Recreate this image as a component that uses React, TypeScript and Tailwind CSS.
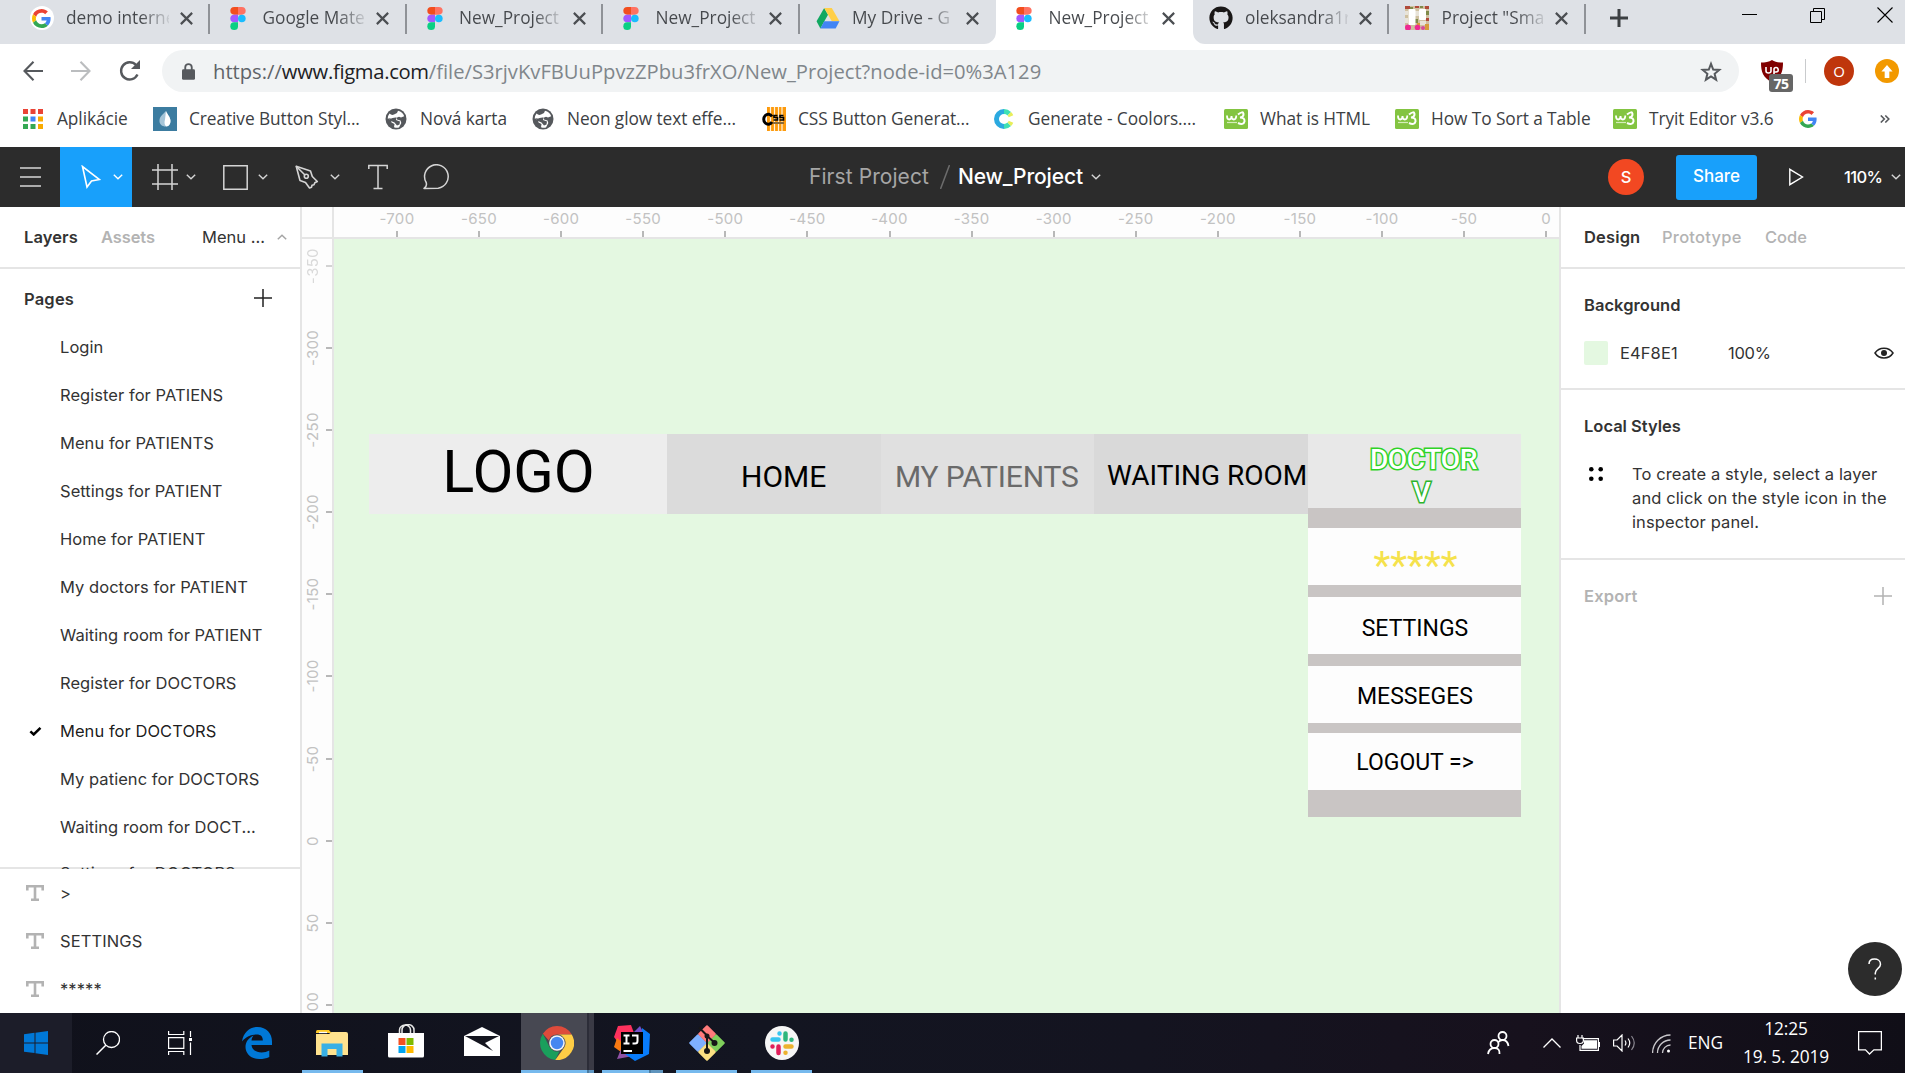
import type { ReactNode } from 'react';
import { FaGithub } from 'react-icons/fa';

const ui = "font-['Inter',sans-serif]";
const seg = "font-['Open_Sans',sans-serif]";

function GoogleG({ className }: { className: string }) {
  return (
    <svg viewBox="0 0 48 48" preserveAspectRatio="none" className={className}>
      <path fill="#EA4335" d="M24 9.5c3.54 0 6.71 1.22 9.21 3.6l6.85-6.85C35.9 2.38 30.47 0 24 0 14.62 0 6.51 5.38 2.56 13.22l7.98 6.19C12.43 13.72 17.74 9.5 24 9.5z" />
      <path fill="#4285F4" d="M46.98 24.55c0-1.57-.15-3.09-.38-4.55H24v9.02h12.94c-.58 2.96-2.26 5.48-4.78 7.18l7.73 6c4.51-4.18 7.09-10.36 7.09-17.65z" />
      <path fill="#FBBC05" d="M10.53 28.59c-.48-1.45-.76-2.99-.76-4.59s.27-3.14.76-4.59l-7.98-6.19C.92 16.46 0 20.12 0 24c0 3.88.92 7.54 2.56 10.78l7.97-6.19z" />
      <path fill="#34A853" d="M24 48c6.48 0 11.93-2.13 15.89-5.81l-7.73-6c-2.15 1.45-4.92 2.3-8.16 2.3-6.26 0-11.57-4.22-13.47-9.91l-7.98 6.19C6.51 42.62 14.62 48 24 48z" />
    </svg>
  );
}

function FigmaLogo() {
  return (
    <svg viewBox="0 0 16 24" className="h-[23px] w-4">
      <path fill="#f24e1e" d="M8 0H4a4 4 0 0 0 0 8h4z" />
      <path fill="#ff7262" d="M8 0h4a4 4 0 0 1 0 8H8z" />
      <path fill="#a259ff" d="M8 8H4a4 4 0 0 0 0 8h4z" />
      <circle cx="12" cy="12" r="4" fill="#1abcfe" />
      <path fill="#0acf83" d="M4 16h4v4a4 4 0 1 1-4-4z" />
    </svg>
  );
}

function DriveLogo() {
  return (
    <svg viewBox="0 0 24 22" className="h-[21px] w-6">
      <path fill="#11a861" d="M8 0 0 14l4 7.5L12 7z" />
      <path fill="#ffcf48" d="M8 0h8l8 14h-8z" />
      <path fill="#4285f4" d="M4 21.5 8 14h16l-4 7.5z" />
    </svg>
  );
}

function TrelloThumb() {
  return (
    <svg viewBox="0 0 24 24" className="size-6">
      <rect width="24" height="24" fill="#cfc0a0" />
      <path fill="#b04a3a" d="M0 0h5v3H0zM10 0h4v2h-4zM20 0h4v3h-4zM21 12h3v3h-3z" />
      <path fill="#e8e3d8" d="M0 5h3v4H0zM10 5h4v5h-4zM15 15h6v4h-6zM0 12h3v5H0z" />
      <path fill="#7f8a4a" d="M5 1h3v2H5zM15 0h3v2h-3zM21 5h3v4h-3zM10 13h3v4h-3z" />
      <path fill="#d89a3a" d="M12 17h3v3h-3zM20 18h4v6h-4z" />
      <circle cx="3" cy="21.5" r="3" fill="#ee2a92" />
      <circle cx="12.5" cy="21.5" r="2.8" fill="#ee2a92" />
      <circle cx="18" cy="22" r="2" fill="#d64a9a" />
      <rect x="3.5" y="3" width="7" height="16" rx="1" fill="#fff" />
      <rect x="14" y="3" width="7" height="11" rx="1" fill="#fff" />
    </svg>
  );
}

function Tab({ icon, title, active, noRule }: { icon: ReactNode; title: string; active?: boolean; noRule?: boolean }) {
  const fade = active
    ? 'bg-[linear-gradient(90deg,#45484c_72%,#fff_104%)]'
    : 'bg-[linear-gradient(90deg,#45484c_72%,#dee1e6_104%)]';
  return (
    <div className={`relative flex h-11 w-[196.5px] shrink-0 items-center pb-2 ${active ? 'bg-white' : ''}`}>
      {active && (
        <>
          <svg viewBox="0 0 12 12" className="absolute bottom-0 -left-3 size-3"><path d="M12 0v12H0A12 12 0 0 0 12 0z" fill="#fff" /></svg>
          <svg viewBox="0 0 12 12" className="absolute -right-3 bottom-0 size-3"><path d="M0 0v12h12A12 12 0 0 1 0 0z" fill="#fff" /></svg>
        </>
      )}
      <div className="ml-4 flex w-6 justify-center">{icon}</div>
      <div className={`ml-[12.5px] w-[103px] bg-clip-text text-[17.3px] whitespace-nowrap text-transparent ${fade}`}>{title}</div>
      <svg viewBox="0 0 12 12" className="ml-[10.5px] size-[13px]">
        <path d="M.8.8l10.4 10.4M11.2.8.8 11.2" stroke="#4b4e52" strokeWidth="2" fill="none" />
      </svg>
      {!noRule && <div className="absolute top-1 right-0 h-[30px] w-0.5 bg-[#8f9297]" />}
    </div>
  );
}

function Globe() {
  return (
    <svg viewBox="0 0 22 22" className="size-[22px]">
      <circle cx="11" cy="11" r="10.5" fill="#55585c" />
      <path fill="#fff" d="M13 2.8c3.200.6 5.300 2.700 6.200 5.500L16 9.500l-2-.8-2.500 1L12 11.500l3.500 1 .8 2.500-2.300 4.500a8.700 8.700 0 0 1-5-.3L9.500 16l-3-1.500L6 12 2.700 10.500A8.700 8.700 0 0 1 4.500 5.500C6 6.500 7 7.500 9 6.500L12 5z" />
      <path fill="#55585c" d="M3 10c3 1.500 5-1 8.500-.5L11 12l4 1.500-.5 3-2.500 1-2.500-3L6 13z" />
    </svg>
  );
}

function W3() {
  return (
    <svg viewBox="0 0 24 20" preserveAspectRatio="none" className="h-5 w-6">
      <rect width="24" height="20" rx="1.5" fill="#83c441" />
      <path d="M3 6.500q0 4 2.200 4T7.500 7q0 3.500 2.300 3.500T12.300 6.500" stroke="#fff" strokeWidth="1.8" fill="none" />
      <path d="M14 5.500q5-4 5.500-.5.200 3-3.500 3.500 5 0 4.500 4-1 4-6.500 1.500" stroke="#fff" strokeWidth="2" fill="none" />
      <path d="M3 13.500h10" stroke="#d5edb9" strokeWidth="1.2" />
    </svg>
  );
}

function Bookmark({ icon, label, width }: { icon: ReactNode; label: string; width: string }) {
  return (
    <div className={`flex shrink-0 items-center ${width}`}>
      <div className="flex w-6 justify-center">{icon}</div>
      <span className="ml-3 text-[17.3px] tracking-[-0.07px] whitespace-nowrap text-[#3c4043]">{label}</span>
    </div>
  );
}

function Chevron({ className }: { className: string }) {
  return (
    <svg viewBox="0 0 10 6" className={`h-1.5 w-2.5 shrink-0 ${className}`}>
      <path d="M.8.8 5 4.8 9.2.8" stroke="currentColor" strokeWidth="1.4" fill="none" />
    </svg>
  );
}

function BrowserChrome() {
  return (
    <header className={`${seg} flex h-[147px] shrink-0 flex-col bg-white`}>
      <div className="flex h-11 bg-[#dee1e6] pl-[13.5px]">
        <Tab icon={<div className="flex size-6 shrink-0 items-center justify-center rounded-full bg-white"><GoogleG className="size-[19px]" /></div>} title="demo interne" />
        <Tab icon={<FigmaLogo />} title="Google Mate" />
        <Tab icon={<FigmaLogo />} title="New_Project" />
        <Tab icon={<FigmaLogo />} title="New_Project" />
        <Tab icon={<DriveLogo />} title="My Drive - G" noRule />
        <Tab icon={<FigmaLogo />} title="New_Project" active noRule />
        <Tab icon={<FaGithub className="size-6 text-[#191717]" />} title="oleksandra1r" />
        <Tab icon={<TrelloThumb />} title={'Project "Sma'} />
        <svg viewBox="0 0 18 18" className="mt-[9px] ml-6 size-[18px]"><path d="M9 0v18M0 9h18" stroke="#3c4043" strokeWidth="3" /></svg>
        <div className="mr-3 ml-auto flex h-8 items-center gap-[53px] text-black">
          <svg viewBox="0 0 15 15" className="size-[15px]"><path d="M0 5.500h15" stroke="currentColor" strokeWidth="1" /></svg>
          <svg viewBox="0 0 15 15" className="-mt-0.5 size-[15px]"><path d="M.5 3.500h11v11H.5zM3.500 3.500v-3h11v11h-3" stroke="currentColor" strokeWidth="1" fill="none" /></svg>
          <svg viewBox="0 0 16 16" className="-mt-0.5 -ml-px size-4"><path d="M.5.5l15 15M15.500.5l-15 15" stroke="currentColor" strokeWidth="1.1" /></svg>
        </div>
      </div>
      <div className="flex h-[54px] items-center pl-[23px]">
        <svg viewBox="0 0 20 20" className="size-5 text-[#56595d]"><path d="M10.500.8 1.500 10l9 9.200M1.500 10H20" stroke="currentColor" strokeWidth="2.100" fill="none" /></svg>
        <svg viewBox="0 0 20 20" className="ml-7 size-5 text-[#bbbdbf]"><path d="M9.500.8l9 9.200-9 9.200M18.500 10H0" stroke="currentColor" strokeWidth="2.100" fill="none" /></svg>
        <svg viewBox="0 0 22 22" className="ml-7 size-[22px] text-[#56595d]">
          <path d="M18.500 14.500A8.600 8.600 0 1 1 17 5" stroke="currentColor" strokeWidth="2.400" fill="none" />
          <path d="M21 0v9h-9z" fill="currentColor" />
        </svg>
        <div className="ml-[21px] flex h-[42px] w-[1577px] items-center rounded-full bg-[#f1f3f4] pr-[17px] pl-5">
          <svg viewBox="0 0 14 18" className="h-[17px] w-[13px] text-[#56595d]">
            <path d="M3.500 8V4.500a3.500 3.500 0 0 1 7 0V8" stroke="currentColor" strokeWidth="2" fill="none" />
            <rect y="6.5" width="14" height="11.5" rx="1.5" fill="currentColor" />
          </svg>
          <span className="ml-[18px] text-[20.2px] whitespace-nowrap text-[#80868b]">
            <span className="text-[#5f6368]">https://</span>
            <span className="tracking-[-0.3px] text-[#202124]">www.figma.com</span>
            /file/S3rjvKvFBUuPpvzZPbu3frXO/New_Project?node-id=0%3A129
          </span>
          <svg viewBox="0 0 22 21" className="ml-auto h-[21px] w-[22px]"><path d="M11 2.800l2.200 5.700 6.100.4-4.700 3.900 1.500 5.900L11 15.400l-5.100 3.300 1.500-5.900-4.700-3.900 6.100-.4z" stroke="#56595d" strokeWidth="2" fill="none" /></svg>
        </div>
        <div className="relative ml-[22px] size-[22px]">
          <svg viewBox="0 0 22 22" className="size-[22px]">
            <path d="M11 0c3 2 7 2.500 11 2.500C22 12 20 18 11 22 2 18 0 12 0 2.500 4 2.500 8 2 11 0z" fill="#800000" />
            <path d="M5 7v4q0 2 2.500 2T10 11V7M13 15V9.500q0-2 2-2t2.200 2.200-2.200 2.300h-1.500" stroke="#fff" strokeWidth="1.6" fill="none" />
          </svg>
          <div className="absolute top-[14px] left-[8px] flex h-[18px] w-6 items-center justify-center rounded-[3px] bg-[#666] text-[14px] font-bold tracking-[-0.5px] text-white">75</div>
        </div>
        <div className="ml-[22px] h-6 w-px bg-[#c9cbcd]" />
        <div className="ml-[18px] flex size-[30px] items-center justify-center rounded-full bg-[#bf360c] text-[15px] text-white">O</div>
        <div className="ml-[21px] flex size-6 items-center justify-center rounded-full bg-[#f29900]">
          <svg viewBox="0 0 12 14" className="h-[13px] w-3"><path d="M6 0l6 7H8.500v7h-5V7H0z" fill="#fff" /></svg>
        </div>
      </div>
      <div className="flex h-[42px] items-center pl-[21px]">
        <Bookmark width="w-[132px]" label="Aplikácie" icon={
          <svg viewBox="0 0 20 20" className="size-5">
            <path fill="#ea4335" d="M0 0h5v5H0zM7.500 0h5v5h-5zM15 0h5v5h-5z" />
            <path fill="#34a853" d="M0 7.500h5v5H0zM0 15h5v5H0zM7.500 15h5v5h-5z" />
            <path fill="#4285f4" d="M7.500 7.500h5v5h-5z" />
            <path fill="#f9ab00" d="M15 7.500h5v5h-5zM15 15h5v5h-5z" />
          </svg>} />
        <Bookmark width="w-[231px]" label="Creative Button Styl..." icon={
          <svg viewBox="0 0 24 24" className="size-6">
            <rect width="24" height="24" fill="#3c7ca0" />
            <path d="M13 4c1 3 4.500 6 4.500 10a4.500 5.500 0 0 1-5 5.500c-3 0-6.500-2-6-6.500.5-4 3-5 6.500-9z" fill="#a5c5d8" />
            <path d="M13 4c1 3 4.500 6 4.500 10a4.500 5.500 0 0 1-4 5.500c-2-1-2.500-4-1.500-7z" fill="#fff" />
          </svg>} />
        <Bookmark width="w-[147px]" label="Nová karta" icon={<Globe />} />
        <Bookmark width="w-[231px]" label="Neon glow text effe..." icon={<Globe />} />
        <Bookmark width="w-[230px]" label="CSS Button Generat..." icon={
          <svg viewBox="0 0 24 24" className="size-6">
            <rect x="5" width="19" height="24" fill="#fd9a0c" />
            <path d="M8.500 0v24M12.500 0v24M16.500 0v24M20 0v24" stroke="#fff3df" strokeWidth="1.2" />
            <path d="M10 9.500A4.500 5 0 1 0 10 15" stroke="#000" strokeWidth="3" fill="none" />
            <path d="M15.500 8.500H12v2h3.500V13h-4M21.500 8.500H18v2h3.500V13h-4" stroke="#000" strokeWidth="1.6" fill="none" />
            <path d="M11 16h11" stroke="#8a6a3a" strokeWidth="2" />
          </svg>} />
        <Bookmark width="w-[232px]" label="Generate - Coolors...." icon={
          <svg viewBox="0 0 20 20" className="size-5" fill="none" strokeWidth="5">
            <path d="M10 2.500A7.500 7.500 0 0 0 10 17.500" stroke="#2ba9e0" />
            <path d="M10 2.500A7.500 7.500 0 0 1 15.300 4.700M10 17.500A7.500 7.500 0 0 0 15.300 15.300" stroke="#3fe0b5" />
            <path d="M15.300 4.700A7.500 7.500 0 0 1 17 7.200M15.300 15.300A7.500 7.500 0 0 0 17 12.800" stroke="#e8ee5a" />
          </svg>} />
        <Bookmark width="w-[171px]" label="What is HTML" icon={<W3 />} />
        <Bookmark width="w-[218px]" label="How To Sort a Table" icon={<W3 />} />
        <Bookmark width="w-[183px]" label="Tryit Editor v3.6" icon={<W3 />} />
        <GoogleG className="ml-[3px] h-[18px] w-[18px]" />
        <svg viewBox="0 0 10 8" className="mr-[15px] ml-auto h-2 w-2.5"><path d="M.8.5 4.300 4 .8 7.500M5.300.5 8.800 4 5.300 7.500" stroke="#56595d" strokeWidth="1.6" fill="none" /></svg>
      </div>
    </header>
  );
}

function Toolbar() {
  return (
    <div className={`${ui} flex h-[60px] shrink-0 items-center bg-[#2c2c2c] whitespace-nowrap text-[#d5d5d5]`}>
      <div className="flex w-[60px] justify-center">
        <svg viewBox="0 0 21 20" className="h-5 w-[21px]"><path d="M0 1h21M0 10h21M0 19h21" stroke="currentColor" strokeWidth="1.6" /></svg>
      </div>
      <div className="flex h-full w-[72px] items-center bg-[#18a0fb] pl-[21px] text-white">
        <svg viewBox="0 0 20 24" className="h-6 w-5"><path d="M1.500 1.500 6 22l4.500-6 8-1.500z" stroke="currentColor" strokeWidth="1.6" fill="none" /></svg>
        <Chevron className="ml-[12px]" />
      </div>
      <div className="flex w-[72px] items-center pl-5">
        <svg viewBox="0 0 26 26" className="size-[26px]"><path d="M6 0v26M20 0v26M0 6h26M0 20h26" stroke="currentColor" strokeWidth="1.5" /></svg>
        <Chevron className="ml-2" />
      </div>
      <div className="flex w-[72px] items-center pl-[19px]">
        <svg viewBox="0 0 25 25" className="size-[25px]"><path d="M.8.8h23.400v23.400H.8z" stroke="currentColor" strokeWidth="1.5" fill="none" /></svg>
        <Chevron className="ml-[10px]" />
      </div>
      <div className="flex w-[78px] items-center pl-[19px]">
        <svg viewBox="0 0 24 24" className="size-6" fill="none" stroke="currentColor" strokeWidth="1.6" strokeLinejoin="round">
          <path d="M1.200 1.200 5 15.500l5.500 2 4 5.500 2-.8.500-2 2-.5.800-2 2.500-1.200-5-5L15.500 6z" />
          <path d="M1.200 1.200l9 9" />
          <circle cx="11.300" cy="11.300" r="2" />
        </svg>
        <Chevron className="ml-[11px]" />
      </div>
      <svg viewBox="0 0 20 26" className="ml-[14px] h-[26px] w-5"><path d="M.8 5V1.500h18.400V5M10 1.500v23M5.500 24.500h9" stroke="currentColor" strokeWidth="1.5" fill="none" /></svg>
      <svg viewBox="0 0 28 26" className="ml-[35px] h-[26px] w-7"><path d="M1 24.500c2.500-1.500 3-3 2.200-6A11.800 11.800 0 1 1 15.200 24.200z" stroke="currentColor" strokeWidth="1.5" fill="none" strokeLinejoin="round" /></svg>
      <span className="ml-[358px] text-[21px] tracking-[0.07px] text-[#a6a6a6]">First Project</span>
      <svg viewBox="0 0 10 24" className="ml-[11px] h-6 w-[10px]"><path d="M9.500 0 .5 24" stroke="#6c6c6c" strokeWidth="1.5" /></svg>
      <span className="ml-[8px] text-[21px] font-medium tracking-[-0.13px] text-white">New_Project</span>
      <Chevron className="ml-[8px]" />
      <div className="ml-auto flex size-9 items-center justify-center rounded-full bg-[#f24822] text-[16.5px] font-medium text-white">S</div>
      <div className="ml-8 flex h-[45px] w-[81px] items-center justify-center rounded-[3px] bg-[#18a0fb] text-[17px] font-medium text-white">Share</div>
      <svg viewBox="0 0 15 18" className="ml-8 h-[18px] w-[15px]"><path d="M.8 1.300v15.400L13.500 9z" stroke="#fff" strokeWidth="1.4" fill="none" /></svg>
      <span className="ml-[40px] w-[43px] text-[16.5px] font-medium tracking-[-0.6px] text-white">110%</span>
      <Chevron className="mr-1 ml-[4px]" />
    </div>
  );
}

const pages = ['Login', 'Register for PATIENS', 'Menu for PATIENTS', 'Settings for PATIENT', 'Home for PATIENT', 'My doctors for PATIENT', 'Waiting room for PATIENT', 'Register for DOCTORS', 'Menu for DOCTORS', 'My patienc for DOCTORS', 'Waiting room for DOCT...', 'Settings for DOCTORS'];

function LeftPanel() {
  return (
    <aside className="flex w-[302px] shrink-0 flex-col border-r-2 border-[#e5e5e5] bg-white text-[16.5px] whitespace-nowrap text-[#333]">
      <div className="flex h-[62px] shrink-0 items-center border-b-2 border-[#e5e5e5] pl-6">
        <span className="w-[77px] font-semibold tracking-[0.1px]">Layers</span>
        <span className="w-[101px] font-semibold tracking-[-0.1px] text-[#b3b3b3]">Assets</span>
        <span>Menu ...</span>
        <svg viewBox="0 0 10 6" className="mr-[13px] ml-auto h-1.5 w-2.5"><path d="M.8 5.200 5 1.200l4.200 4" stroke="#a5a5a5" strokeWidth="1.5" fill="none" /></svg>
      </div>
      <div className="relative z-10 flex h-[600px] shrink-0 flex-col overflow-hidden">
        <div className="flex h-[54px] shrink-0 items-center justify-between pt-[6px] pr-[28px] pl-6">
          <span className="font-semibold tracking-[0.2px]">Pages</span>
          <svg viewBox="0 0 18 18" className="-mt-[2px] size-[18px]"><path d="M9 0v18M0 9h18" stroke="#222" strokeWidth="1.5" /></svg>
        </div>
        {pages.map((p) => (
          <div key={p} className="flex h-12 shrink-0 items-center last:-mt-0.5">
            <div className="flex w-[60px] pl-[29px]">
              {p === 'Menu for DOCTORS' && <svg viewBox="0 0 14 10" className="h-[9px] w-[13px]"><path d="M1.300 4.800 5 8.300 12.500 1" stroke="#000" strokeWidth="2.8" fill="none" /></svg>}
            </div>
            <span className={`tracking-[0.05px] ${p === 'Menu for DOCTORS' ? 'text-black/90' : ''}`}>{p}</span>
          </div>
        ))}
      </div>
      <div className="-mt-0.5 flex min-h-0 flex-1 flex-col border-t-2 border-[#e5e5e5]">
        {['>', 'SETTINGS', '*****'].map((t) => (
          <div key={t} className="flex h-12 shrink-0 items-center">
            <svg viewBox="0 0 18 16" className="mr-4 ml-[26px] h-4 w-[18px]"><path d="M1.300 5.500V1.300h15.400v4.200M9 1.300v13.200M5 14.700h8" stroke="#b3b3b3" strokeWidth="2.6" fill="none" /></svg>
            <span className="tracking-[0.1px]">{t}</span>
          </div>
        ))}
      </div>
    </aside>
  );
}

const xTicks = [-700, -650, -600, -550, -500, -450, -400, -350, -300, -250, -200, -150, -100, -50, 0];
const yTicks = [-350, -300, -250, -200, -150, -100, -50, 0, 50, 100];

function MenuItem({ place, label }: { place: string; label: string }) {
  return (
    <div className={`absolute left-0 flex h-[57px] w-[213px] items-center justify-center bg-[#fdfdfd] pl-px text-[23px] text-black ${place}`}>{label}</div>
  );
}

function Canvas() {
  return (
    <main className="flex w-[1259px] shrink-0 flex-col overflow-hidden border-r-2 border-[#e5e5e5]">
      <div className="flex h-8 shrink-0 border-b-2 border-[#e5e5e5] bg-[#fdfdfd]">
        <div className="h-full w-8 shrink-0 border-r-2 border-[#e5e5e5]" />
        <div className="flex min-w-0 flex-1 overflow-hidden pl-[21.9px]">
          {xTicks.map((n) => (
            <div key={n} className="flex h-[30px] w-[82.1px] shrink-0 flex-col items-center justify-end text-[15px] leading-[15px] tracking-[0.3px] text-[#c2c2c2]">
              <span className="mb-[5.5px]">{n}</span>
              <div className="h-1.5 w-0.5 bg-[#b8b8b8]" />
            </div>
          ))}
        </div>
      </div>
      <div className="flex min-h-0 flex-1">
        <div className="flex w-8 shrink-0 flex-col overflow-hidden border-r-2 border-[#e5e5e5] bg-[#fdfdfd]">
          <div className="-mt-[14.6px] flex flex-col">
            {yTicks.map((n) => (
              <div key={n} className={`flex h-[82.2px] shrink-0 items-center justify-end ${n === -350 ? 'opacity-60' : ''}`}>
                <div className="flex w-[22px] justify-center">
                  <span className="-rotate-90 text-[15px] leading-[22px] tracking-[0.3px] whitespace-nowrap text-[#c2c2c2]">{n}</span>
                </div>
                <div className="ml-[2px] h-0.5 w-1.5 shrink-0 bg-[#b8b8b8]" />
              </div>
            ))}
          </div>
        </div>
        <div className="relative flex-1 overflow-hidden bg-[#e4f8e1] font-['Roboto',sans-serif] whitespace-nowrap">
          <div className="absolute top-[195px] left-[35px] flex h-20">
            <div className="flex w-[298px] items-center justify-center bg-[#ededed] pb-[3px] pl-px text-[59.5px] leading-none text-black">LOGO</div>
            <div className="flex w-[214px] items-center bg-[#dbdbdb] pt-1 pl-[74px] text-[30px] text-black">HOME</div>
            <div className="flex w-[213px] items-center bg-[#e0e0e0] pt-1 pl-[14px] text-[30px] tracking-[-0.16px] text-[#6a6a6a]">MY PATIENTS</div>
            <div className="flex w-[214px] items-center bg-[#d9d9d9] pt-1 pl-[13px] text-[28px] text-black">WAITING ROOM</div>
          </div>
          <div className="absolute top-[195px] left-[974px] h-[383px] w-[213px] bg-[#c9c5c4]">
            <div className="flex h-[74px] flex-col items-center bg-[#e8e8e8] pt-[9px] pl-[18px] text-[28px] leading-[33px] font-medium tracking-[-0.3px] text-white [paint-order:stroke_fill]">
              <span className="[-webkit-text-stroke:3px_#2fd326]">DOCTOR</span>
              <span className="pr-1 [-webkit-text-stroke:3px_#2cb42c]">V</span>
            </div>
            <div className="absolute top-[94px] left-0 flex h-[57px] w-[213px] items-center justify-center bg-[#fdfdfd] pt-5 pl-0.5 text-[39px] leading-none text-[#f5e24c]">*****</div>
            <MenuItem place="top-[163px] pt-[8px]" label="SETTINGS" />
            <MenuItem place="top-[232px] pt-[5px]" label="MESSEGES" />
            <MenuItem place="top-[299px] pt-[3px]" label="LOGOUT =>" />
          </div>
        </div>
      </div>
    </main>
  );
}

function RightPanel() {
  return (
    <aside className="relative min-w-0 flex-1 bg-white text-[16.5px] text-[#333]">
      <div className="flex h-[62px] items-center border-b-2 border-[#e5e5e5] pl-[23px] font-semibold">
        <span className="w-[78px] tracking-[0.15px]">Design</span>
        <span className="w-[103px] font-medium tracking-[0.25px] text-[#b3b3b3]">Prototype</span>
        <span className="font-medium text-[#b3b3b3]">Code</span>
      </div>
      <div className="h-[121px] border-b-2 border-[#e5e5e5] pt-[24px] pl-[23px]">
        <div className="leading-6 font-semibold tracking-[0.05px]">Background</div>
        <div className="mt-6 flex h-6 items-center">
          <div className="size-6 rounded-[2px] bg-[#e4f8e1]" />
          <span className="ml-3 w-[108px] tracking-[0.1px]">E4F8E1</span>
          <span className="tracking-[-0.3px]">100%</span>
          <svg viewBox="0 0 20 12" className="mr-[11px] ml-auto h-3 w-5"><path d="M1 6c4-6.500 14-6.500 18 0-4 6.500-14 6.500-18 0z" stroke="#222" strokeWidth="1.5" fill="none" /><circle cx="10" cy="6" r="3" fill="#222" /></svg>
        </div>
      </div>
      <div className="h-[170px] border-b-2 border-[#e5e5e5] pt-[24px] pl-[23px]">
        <div className="leading-6 font-semibold">Local Styles</div>
        <div className="mt-6 flex">
          <svg viewBox="0 0 14 14" className="mt-[5px] ml-[5px] size-[14px]"><circle cx="2.300" cy="2.300" r="2.300" /><circle cx="11.700" cy="2.300" r="2.300" /><circle cx="2.300" cy="11.700" r="2.300" /><circle cx="11.700" cy="11.700" r="2.300" /></svg>
          <p className="ml-[29px] leading-6 tracking-[0.11px] whitespace-nowrap">To create a style, select a layer<br />and click on the style icon in the<br />inspector panel.</p>
        </div>
      </div>
      <div className="flex h-[72px] items-center justify-between pr-[13px] pl-[23px] font-semibold tracking-[0.2px] text-[#b3b3b3]">
        Export
        <svg viewBox="0 0 18 18" className="size-[18px]"><path d="M9 0v18M0 9h18" stroke="#b3b3b3" strokeWidth="1.5" /></svg>
      </div>
      <div className="absolute right-[3px] bottom-[17px] flex size-[54px] items-center justify-center rounded-full bg-[#2c2c2c]">
        <svg viewBox="0 0 14 22" className="h-[22px] w-[14px]"><path d="M1 6C1 2.500 3.500 1 6.500 1s6 1.800 6 5.200c0 4-5.200 4.300-5.200 8.800v1.500M7.300 19.500v2" stroke="#fff" strokeWidth="1.5" fill="none" /></svg>
      </div>
    </aside>
  );
}

function TaskApp({ width, children, mark, active }: { width: string; children: ReactNode; mark?: string; active?: boolean }) {
  return (
    <div className={`relative flex h-[60px] shrink-0 items-center justify-center ${width} ${active ? 'bg-[linear-gradient(90deg,#474852_66px,#2c2d38_66px,#2c2d38_68px,#3a3a45_68px)]' : ''}`}>
      {children}
      {mark && <div className={`absolute bottom-0 h-[3px] ${mark}`} />}
    </div>
  );
}

function Taskbar() {
  return (
    <footer className={`${seg} flex h-[60px] shrink-0 items-center bg-[linear-gradient(90deg,#10111b_0%,#131521_40%,#141420_60%,#17111d_80%,#100e17_100%)] text-white`}>
      <TaskApp width="w-[72px] bg-[#1c1d29]">
        <svg viewBox="0 0 24 24" className="size-6"><path fill="#0078d7" d="M0 3.300l10.500-1.500v9.600H0zM11.500 1.700 24 0v11.400H11.500zM0 12.400h10.500V22L0 20.700zM11.500 12.400H24V24l-12.500-1.800z" /></svg>
      </TaskApp>
      <TaskApp width="w-[72px]">
        <svg viewBox="0 0 24 24" className="size-6"><circle cx="15.500" cy="8.500" r="8" stroke="#fff" strokeWidth="1.3" fill="none" /><path d="M9.800 14.200.5 23.500" stroke="#fff" strokeWidth="1.5" /></svg>
      </TaskApp>
      <TaskApp width="w-[72px]">
        <svg viewBox="0 0 25 24" className="h-6 w-[25px]" stroke="#fff" strokeWidth="1.2" fill="none"><path d="M.6 0v3.500h15.200V0M.6 6.600h15.200v10.800H.6zM.6 24v-3.500h15.200V24M22.500 0v6M22.500 11.500V24" /><path d="M21 7h3v3h-3z" fill="#fff" stroke="none" /></svg>
      </TaskApp>
      <TaskApp width="w-[82px]">
        <svg viewBox="0 0 30 32" className="h-8 w-[30px]"><path fill="#0078d7" d="M0 14.500C1.500 5 8 0 15.500 0 24.500 0 30 6.500 30 14.500V18H9.500c.3 5 5 7.500 10 7.500 3 0 5.500-.8 7.800-2V30c-3 1.500-6 2-10 2C9 32 3.500 26.500 3.500 20c0-5 3-9 8-11.500-1.200 1.500-1.700 3-2 5h11.300c0-4-2-6-6-6C9.500 7.500 4 9.500 0 14.500z" /></svg>
      </TaskApp>
      <TaskApp width="w-[68px]" mark="left-[4px] w-[61px] bg-[#76b9ed]">
        <svg viewBox="0 0 32 27" className="h-[27px] w-8"><path fill="#ffca28" d="M0 1.500Q0 0 1.500 0H13l2.500 3H0z" /><path fill="#ffe28e" d="M0 4h13l2.500-2H30q2 0 2 2v21H0z" /><path d="M3 2.500h8" stroke="#fff" strokeWidth="1.3" /><path fill="#39b0e5" d="M5.500 13.500h21v13h-6V19h-9v7.500h-6z" /></svg>
      </TaskApp>
      <TaskApp width="w-[80px]">
        <svg viewBox="0 0 36 34" className="mb-1 h-[34px] w-9"><path d="M11.500 9V6a5.500 5 0 0 1 11 0v3M14 9V6a5.500 5 0 0 1 12 0v3" stroke="#e6e6e6" strokeWidth="1.5" fill="none" /><path fill="#fff" d="M0 9h36v23q0 1.500-1.500 1.500h-33Q0 33.500 0 32z" /><path fill="#f25022" d="M10.500 14h7v7h-7z" /><path fill="#7fba00" d="M18.500 14h7v7h-7z" /><path fill="#00a4ef" d="M10.500 22h7v7h-7z" /><path fill="#ffb900" d="M18.500 22h7v7h-7z" /></svg>
      </TaskApp>
      <TaskApp width="w-[75px]">
        <svg viewBox="0 0 36 29" className="mb-1 -ml-1 h-[29px] w-9"><path fill="#fff" d="M0 9 18 0l18 9v20H0z" /><path fill="#14151f" d="M1 9h34l-14 7 8 8z" /></svg>
      </TaskApp>
      <TaskApp width="w-[73px]" active mark="left-0 w-[73px] bg-[linear-gradient(90deg,#76b9ed_66px,#4a7ba0_66px,#4a7ba0_68px,#5f97c4_68px)]">
        <svg viewBox="0 0 48 48" className="mr-0.5 size-[34px]">
          <path fill="#de4b3b" d="M24 0a24 24 0 0 1 20.800 12H24a12 12 0 0 0-11.500 8.500L4 11A24 24 0 0 1 24 0z" />
          <path fill="#1a9f5c" d="M4 11l9.600 19A12 12 0 0 0 27.500 35.500L21.500 48A24 24 0 0 1 4 11z" />
          <path fill="#fecd45" d="M44.800 12A24 24 0 0 1 21.500 48L34.400 30A12 12 0 0 0 24 12z" />
          <circle cx="24" cy="24" r="11" fill="#f5f5f5" /><circle cx="24" cy="24" r="8.800" fill="#4586f0" />
        </svg>
      </TaskApp>
      <TaskApp width="ml-[2px] w-[72px]" mark="left-[6px] w-[61px] bg-[linear-gradient(90deg,#76b9ed_47px,#4a7ba0_47px,#4a7ba0_49px,#5f94bd_49px)]">
        <svg viewBox="0 0 36 36" className="size-9">
          <path fill="#fe315d" d="M4 1l13-1 3 8-8 12H6L0 12z" /><path fill="#f97a12" d="M3 13 0 22l7 5 4-7z" /><path fill="#9052a5" d="M7 24 3 34l16-3-2-9z" /><path fill="#7350c8" d="M19 8l7-7 3 6v8H19z" /><path fill="#087cfa" d="M28 3l8 6-1 20-14 7-10-7 16-6z" />
          <rect x="7" y="7" width="22" height="22" fill="#000" />
          <path d="M9.500 10.500h6M12.500 10.500v8M9.500 18.500h6M18 10.500h5.500V16q0 2.500-2.500 2.500h-2.500M9.500 26H18" stroke="#fff" strokeWidth="2" fill="none" />
        </svg>
      </TaskApp>
      <TaskApp width="w-[75px]" mark="left-[8px] w-[61px] bg-[#76b9ed]">
        <svg viewBox="0 0 36 36" className="ml-0.5 size-9">
          <rect x="20.500" y="11.500" width="13" height="13" rx="1" transform="rotate(45 27 18)" fill="#80d05c" />
          <rect x="2.500" y="11.500" width="13" height="13" rx="1" transform="rotate(45 9 18)" fill="#7fb0ff" />
          <rect x="11.500" y="2.500" width="13" height="13" rx="1" transform="rotate(45 18 9)" fill="#ff7b7b" />
          <rect x="11.500" y="20.500" width="13" height="13" rx="1" transform="rotate(45 18 27)" fill="#fbe082" />
          <path d="M10 2.500l8 8v15M18 11l8 7" stroke="#171717" strokeWidth="2" fill="none" /><circle cx="18" cy="26" r="3" fill="#171717" /><circle cx="18" cy="11" r="2.500" fill="#171717" /><circle cx="25.500" cy="18" r="3" fill="#171717" />
        </svg>
      </TaskApp>
      <TaskApp width="w-[75px]" mark="left-[8px] w-[61px] bg-[#76b9ed]">
        <svg viewBox="0 0 34 34" className="ml-0.5 size-[34px]" strokeWidth="4.5" strokeLinecap="round">
          <circle cx="17" cy="17" r="17" fill="#f6f6f6" />
          <path d="M7.500 13.500h6M14.500 7.500h.01" stroke="#36c5f0" /><path d="M20.500 7.500v6M26.500 13.800h.01" stroke="#2eb67d" /><path d="M20.500 20.500h6M20.500 26.700h.01" stroke="#ecb22e" /><path d="M13.500 20.500v6.500M7.500 20.500h.01" stroke="#e01e5a" />
        </svg>
      </TaskApp>
      <div className="mr-[23px] ml-auto flex items-center">
        <svg viewBox="0 0 24 24" className="size-6" stroke="#fff" strokeWidth="1.8" fill="none"><circle cx="15.500" cy="5" r="4" /><circle cx="7.500" cy="13" r="4" /><path d="M1 23q1-6 6.500-6t5 6M11.500 11q1.500-2 4-2 5 0 6 6" /></svg>
        <svg viewBox="0 0 18 10" className="ml-8 h-2.5 w-[18px]"><path d="M.5 9.500 9 1l8.500 8.500" stroke="#fff" strokeWidth="1.3" fill="none" /></svg>
        <svg viewBox="0 0 24 18" className="ml-[15px] h-[18px] w-6"><path d="M6.500 4.600h15.900v11.800H4V11" stroke="#fff" strokeWidth="1.2" fill="none" /><path d="M8 6.200h13v8.600H5.500V12L8 9.500zM22.500 8H24v5h-1.500z" fill="#fff" /><path d="M2 1v3M6 1v3M.6 4h6.800v2.500q0 3-3.400 3T.6 6.500z" stroke="#fff" strokeWidth="1.2" fill="none" /></svg>
        <svg viewBox="0 0 23 18" className="ml-[13px] h-[18px] w-[23px]" stroke="#fff" strokeWidth="1.2" fill="none"><path d="M.6 6h3.500L9 1v16l-4.900-5H.6zM12 6.500q1.800 2.500 0 5M15 4.500q3.500 4.500 0 9" /><path d="M18.500 2q5.500 7 0 14" stroke="#8a8790" /></svg>
        <svg viewBox="0 0 19 19" className="ml-[16px] size-[19px]" stroke="#c9c8cc" strokeWidth="1.3" fill="none"><path d="M.6 19A18 18 0 0 1 18.500 1M5.500 19A13 13 0 0 1 18.500 6M10.500 19a8 8 0 0 1 8-8" /><circle cx="16.500" cy="17" r="1.500" fill="#fff" stroke="none" /></svg>
        <span className="ml-[17px] w-[35px] text-[17.3px]">ENG</span>
        <div className="ml-[18px] flex w-[90px] flex-col items-center text-[17.3px] leading-[28px] tracking-[-0.1px] whitespace-nowrap"><span>12:25</span><span>19. 5. 2019</span></div>
        <svg viewBox="0 0 24 24" className="ml-[27px] size-6"><path d="M.6.6h22.800v18.200h-7.500L11.500 23l-4-4.200H.6z" stroke="#fff" strokeWidth="1.3" fill="none" /></svg>
      </div>
    </footer>
  );
}

export default function App() {
  return (
    <div className="flex h-[1073px] w-[1905px] flex-col overflow-hidden bg-white">
      <BrowserChrome />
      <Toolbar />
      <div className={`${ui} flex min-h-0 flex-1`}>
        <LeftPanel />
        <Canvas />
        <RightPanel />
      </div>
      <Taskbar />
    </div>
  );
}
